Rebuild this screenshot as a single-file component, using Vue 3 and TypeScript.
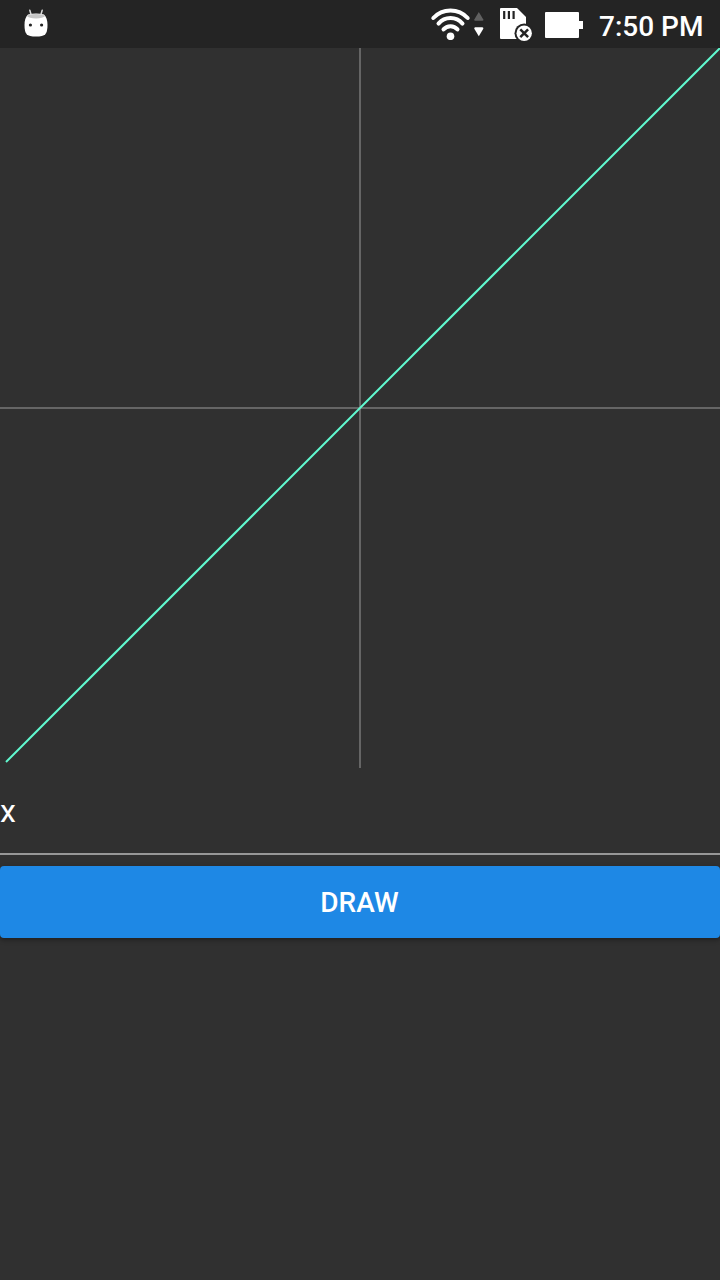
<script setup lang="ts">
import { ref, computed } from 'vue'

const size = 720
const half = size / 2
const expression = ref('x')

const start = { x: -354, y: -354 }
const end = { x: 362, y: 362 }
const points = computed(() =>
  [start, end].map((p) => `${half + p.x},${half - p.y}`).join(' ')
)
</script>

<template>
  <div class="screen">
    <header class="status">
      <svg class="robot" width="26" height="30" viewBox="0 0 26 30">
        <path d="M6.8 1.2 8.2 6M19.2 1.2 17.8 6" stroke="#d8d8d8" stroke-width="1.5" stroke-linecap="round" />
        <path d="M5 5.5Q13 3.6 21 5.5Q24.5 9 24.5 16Q24.5 23 22.3 25.2Q20 27.5 13 27.5Q6 27.5 3.7 25.2Q1.5 23 1.5 16Q1.5 9 5 5.5Z" fill="#fff" />
        <path d="M3.8 7Q5 5 13 5Q21 5 22.2 7Q20 9.4 13 9.4Q6 9.4 3.8 7Z" fill="#c6c6c6" />
        <circle cx="7.4" cy="16" r="1.6" fill="#242424" />
        <circle cx="18.6" cy="16" r="1.6" fill="#242424" />
      </svg>
      <div class="indicators">
        <svg width="56" height="40" viewBox="0 0 56 40">
          <g fill="none" stroke="#fff" stroke-width="4" stroke-linecap="round">
            <path d="M3.3 18A23.4 23.4 0 0 1 37.7 18" />
            <path d="M8.5 23.6A15.8 15.8 0 0 1 32.5 23.6" />
            <path d="M13.5 29.4A9.2 9.2 0 0 1 27.5 29.4" />
          </g>
          <circle cx="20.5" cy="36.3" r="3.8" fill="#fff" />
          <path d="M48.8 12 53.3 19.5Q53.6 20.7 52.4 20.7H45.2Q44 20.7 44.3 19.5Z" fill="#606060" />
          <path d="M48.8 36.2 53.3 28.7Q53.6 27.2 52.4 27.2H45.2Q44 27.2 44.3 28.7Z" fill="#fff" />
        </svg>
        <svg class="card" width="34" height="36" viewBox="0 0 34 36">
          <path d="M1 2H17L26 11V33H1Q0 33 0 32V3Q0 2 1 2Z" fill="#fff" />
          <path d="M4.2 5V13M8.9 5V13M13.6 5V13" stroke="#242424" stroke-width="2.2" />
          <circle cx="24.2" cy="27.2" r="9.7" fill="#242424" />
          <circle cx="24.2" cy="27.2" r="7.7" fill="#fff" />
          <path d="M20.3 23.3 28.1 31.1M28.1 23.3 20.3 31.1" stroke="#242424" stroke-width="2.5" />
        </svg>
        <svg class="battery" width="38" height="28" viewBox="0 0 38 28">
          <path d="M1 1H33Q34 1 34 2V10H38V18H34V26Q34 27 33 27H1Q0 27 0 26V2Q0 1 1 1Z" fill="#fff" />
        </svg>
        <span class="time">7:50 PM</span>
      </div>
    </header>
    <svg class="plot" :width="size" :height="size" :viewBox="`0 0 ${size} ${size}`">
      <path :d="`M0 ${half}H${size}M${half} 0V${size}`" stroke="#656565" stroke-width="2" />
      <polyline :points="points" fill="none" stroke="#60fad0" stroke-width="2" />
    </svg>
    <input v-model="expression" class="field" type="text" spellcheck="false" aria-label="Function" />
    <button class="draw" type="button">DRAW</button>
  </div>
</template>

<style>
body {
  background: #303030;
}
</style>

<style scoped>
.screen {
  display: flex;
  flex-direction: column;
  width: 720px;
  height: 1280px;
  overflow: hidden;
  background: #303030;
  color: #fff;
  font-family: Roboto, sans-serif;
}
.status {
  display: flex;
  justify-content: space-between;
  flex: none;
  height: 48px;
  background: #242424;
}
.robot {
  margin: 9px 0 0 23px;
}
.indicators {
  display: flex;
  align-items: flex-start;
  width: 290px;
}
.indicators svg {
  flex: none;
}
.card {
  margin: 6px 0 0 14px;
}
.battery {
  margin: 11px 0 0 11px;
}
.time {
  margin: 10px 0 0 16px;
  font-size: 28px;
  font-weight: 500;
  line-height: 33px;
  white-space: nowrap;
}
.plot {
  display: block;
  flex: none;
}
.field {
  box-sizing: border-box;
  width: 100%;
  height: 87px;
  flex: none;
  padding: 0;
  border: 0;
  border-bottom: 2px solid #979797;
  border-radius: 0;
  outline: 0;
  background: transparent;
  color: #fff;
  font: 400 32px Roboto, sans-serif;
}
.draw {
  flex: none;
  height: 72px;
  margin-top: 11px;
  padding: 0 1px 0 0;
  border: 0;
  border-radius: 4px;
  background: #1e88e5;
  box-shadow: 0 2px 5px rgba(0, 0, 0, 0.35);
  color: #fff;
  font: 500 28px Roboto, sans-serif;
}
</style>
